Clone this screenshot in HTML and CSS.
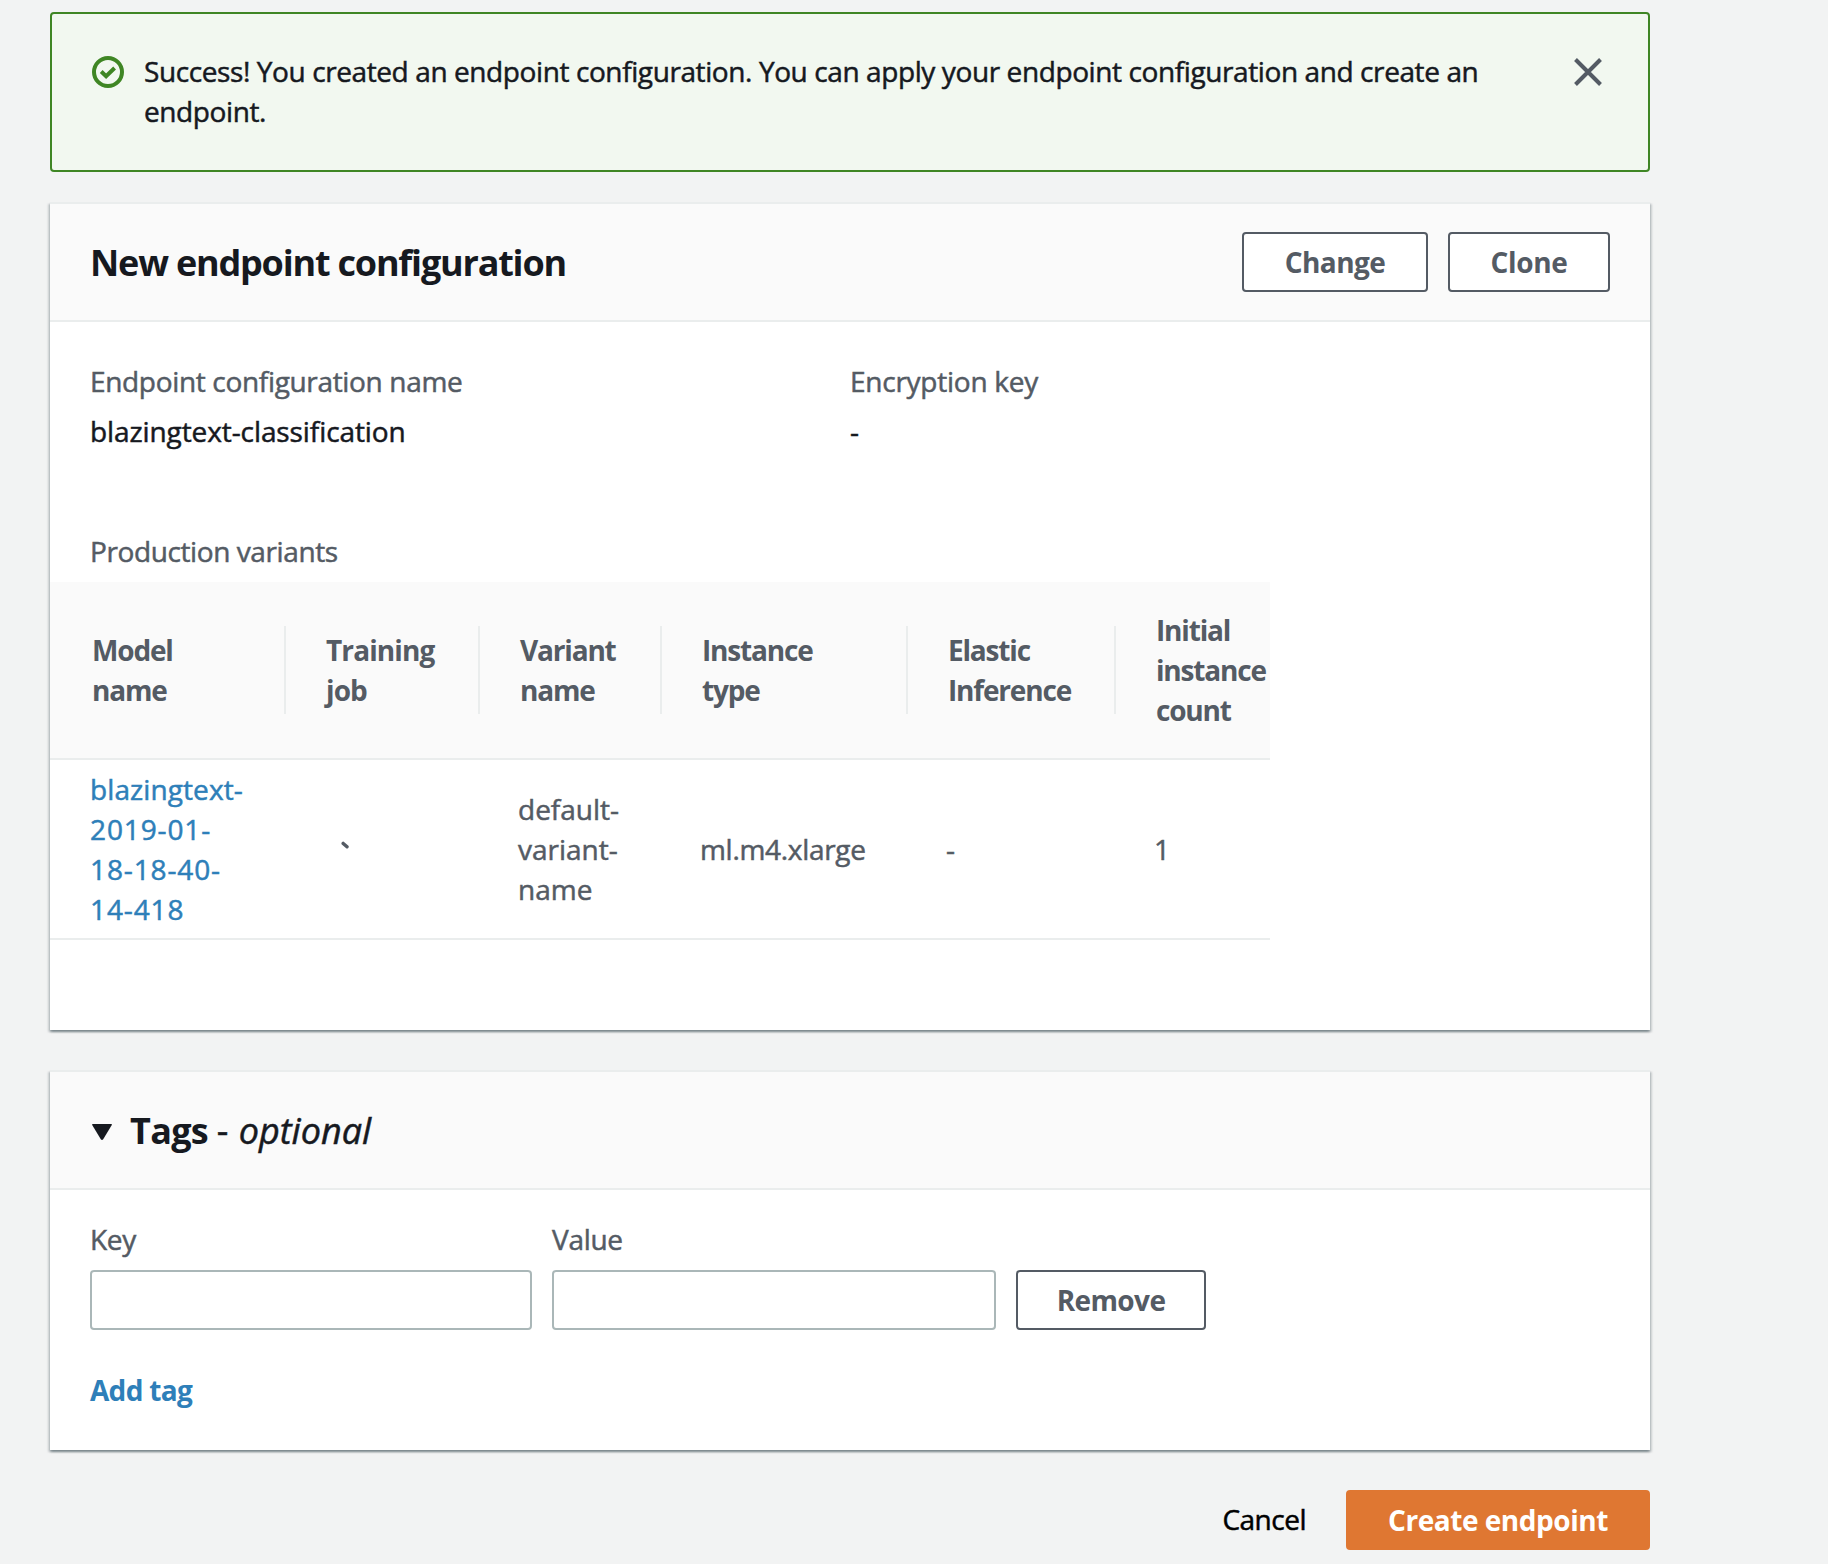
FILE: index.html
```html
<!DOCTYPE html>
<html lang="en">
<head>
<meta charset="utf-8">
<title>Create endpoint</title>
<link rel="stylesheet" href="styles.css">
</head>
<body>
<main class="page">
  <section class="alert">
    <svg class="alert-icon" viewBox="0 0 32 32"><circle cx="16" cy="16" r="14" fill="none" stroke="currentColor" stroke-width="4"/><path d="M9.200 15.500l4.900 4.700 8.500-8.200" fill="none" stroke="currentColor" stroke-width="4"/></svg>
    <p class="alert-text">Success! You created an endpoint configuration. You can apply your endpoint configuration and create an endpoint.</p>
    <svg class="alert-close" viewBox="0 0 28 28"><path d="M1.5 1.5l25 25M26.5 1.5l-25 25" fill="none" stroke="currentColor" stroke-width="4"/></svg>
  </section>

  <section class="panel config">
    <header class="panel-header">
      <h2 class="title">New endpoint configuration</h2>
      <div class="actions">
        <button class="btn change">Change</button>
        <button class="btn clone">Clone</button>
      </div>
    </header>
    <dl class="details">
      <div><dt class="label name">Endpoint configuration name</dt><dd class="value">blazingtext-classification</dd></div>
      <div><dt class="label key">Encryption key</dt><dd class="value">-</dd></div>
    </dl>
    <h3 class="label variants-label">Production variants</h3>
    <div class="variants">
      <div class="row head">
        <div class="cell">Model<br>name</div>
        <div class="cell">Training<br>job</div>
        <div class="cell">Variant<br>name</div>
        <div class="cell">Instance<br>type</div>
        <div class="cell">Elastic<br>Inference</div>
        <div class="cell">Initial<br>instance<br>count</div>
      </div>
      <div class="row">
        <div class="cell"><a class="link"><span class="word">blazingtext-</span><br>2019-01-<br>18-18-40-<br>14-418</a></div>
        <div class="cell"><svg class="mark" viewBox="0 0 9 9"><path d="M2.200 2.400l3.800 3.400" stroke="currentColor" stroke-width="3.4" stroke-linecap="round"/></svg></div>
        <div class="cell">default-<br>variant-<br>name</div>
        <div class="cell type">ml.m4.xlarge</div>
        <div class="cell">-</div>
        <div class="cell">1</div>
      </div>
    </div>
  </section>

  <section class="panel tags">
    <header class="panel-header">
      <svg class="caret" viewBox="0 0 20 16"><path d="M0.6 0h18.8q.8 0 .4 1l-8.600 14.200q-1.200 1.500-2.400 0L.2 1q-.4-1 .4-1z" fill="currentColor"/></svg>
      <h2 class="title tags-title">Tags <span class="optional">- <i>optional</i></span></h2>
    </header>
    <div class="tag-form">
      <label class="field key-field"><span class="label">Key</span><input class="input" type="text"></label>
      <label class="field value-field"><span class="label">Value</span><input class="input" type="text"></label>
      <button class="btn remove">Remove</button>
    </div>
    <a class="add">Add tag</a>
  </section>

  <footer class="footer">
    <a class="cancel">Cancel</a>
    <button class="btn primary">Create endpoint</button>
  </footer>
</main>
</body>
</html>
```
FILE: styles.css
```css
* { box-sizing: border-box; }

body {
  margin: 0;
  height: 1564px;
  overflow: hidden;
  background: #f2f3f3;
  color: #16191f;
  font: 400 28px/40px "Open Sans", "Noto Sans", sans-serif;
  -webkit-text-stroke: .5px currentColor;
}

h2, h3, p, dl, dd { margin: 0; }

.page { width: 1600px; margin: 0 0 0 50px; padding-top: 12px; }

/* Success alert */
.alert {
  display: flex;
  height: 160px;
  padding: 37px 46px 0 40px;
  border: 2px solid #3f8624;
  border-radius: 4px;
  background: #f2f8f0;
}
.alert-icon { width: 32px; height: 32px; margin-top: 5px; color: #3f8624; }
.alert-text { width: 1360px; margin-left: 20px; letter-spacing: -0.4px; }
.alert-close { width: 28px; height: 28px; margin: 7px 0 0 auto; color: #545b64; }

/* Panels */
.panel {
  background: #fff;
  border-top: 2px solid #eaeded;
  box-shadow: 0 2px 2px 0 rgba(0, 28, 36, .3), 2px 2px 2px 0 rgba(0, 28, 36, .15), -2px 2px 2px 0 rgba(0, 28, 36, .15);
}
.config { height: 828px; margin-top: 30px; }
.tags { height: 380px; margin-top: 40px; }
.panel-header {
  display: flex;
  align-items: center;
  height: 118px;
  padding: 0 40px;
  border-bottom: 2px solid #eaeded;
  background: #fafafa;
}
.title {
  padding-top: 2px;
  font-size: 36px;
  line-height: 40px;
  font-weight: 700;
  letter-spacing: -1.2px;
  -webkit-text-stroke: 0;
}
.actions { display: flex; gap: 20px; margin-left: auto; }

.btn {
  height: 60px;
  padding: 8px 0;
  border: 2px solid #545b64;
  border-radius: 4px;
  background: #fff;
  color: #545b64;
  font: 700 28px/40px "Open Sans", "Noto Sans", sans-serif;
  letter-spacing: -0.6px;
  -webkit-text-stroke: 0;
}
.change { width: 186px; }
.clone { width: 162px; letter-spacing: -0.35px; }
.remove { width: 190px; }
.primary {
  width: 304px;
  border-color: #df7732;
  background: #df7732;
  color: #fff;
  letter-spacing: -0.47px;
}

/* Configuration details */
.details { display: grid; grid-template-columns: 760px 1fr; padding: 39px 40px 0; }
.label { display: block; color: #545b64; font-size: 28px; font-weight: 400; letter-spacing: -.3px; }
.name { letter-spacing: -0.33px; }
.key { letter-spacing: -0.25px; }
.value { margin-top: 10px; letter-spacing: -.09px; }
.variants-label { margin: 80px 0 0; padding: 0 40px; letter-spacing: -0.4px; }

/* Production variants table */
.variants { width: 1220px; margin-top: 11px; color: #545b64; }
.row {
  display: grid;
  grid-template-columns: 236px 194px 182px 246px 208px 1fr;
  align-items: center;
  height: 180px;
  border-bottom: 2px solid #eaeded;
}
.cell { padding-left: 40px; }
.row:not(.head) .cell:nth-child(n+2) { padding-left: 38px; }
.head {
  height: 178px;
  background: #fafafa;
  font-weight: 700;
  letter-spacing: -1.18px;
  -webkit-text-stroke: 0;
}
.head .cell { display: flex; align-items: center; height: 88px; border-right: 2px solid #eaeded; }
.head .cell:first-child { padding-left: 42px; }
.head .cell:nth-child(2) { letter-spacing: -.9px; }
.head .cell:last-child { border-right: 0; }
.link { color: #2e7fb9; letter-spacing: .87px; }
.word { letter-spacing: .1px; }
.type { letter-spacing: -.3px; }
.mark { display: block; width: 9px; height: 9px; margin: -8px 0 0 17px; }

/* Tags */
.caret { width: 20px; height: 16px; margin: 4px 18px 0 2px; }
.tags-title { letter-spacing: -0.7px; }
.optional { font-weight: 400; letter-spacing: 0; word-spacing: 1px; -webkit-text-stroke: .5px currentColor; }
.tag-form { display: flex; align-items: flex-end; gap: 20px; padding: 29px 40px 0; }
.key-field { width: 442px; }
.value-field { width: 444px; }
.input {
  display: block;
  width: 100%;
  height: 60px;
  margin-top: 11px;
  border: 2px solid #aab7b8;
  border-radius: 4px;
  background: #fff;
}
.add {
  display: block;
  margin: 40px 0 0 40px;
  color: #2e7fb9;
  font-weight: 700;
  letter-spacing: -0.7px;
  -webkit-text-stroke: 0;
}

/* Page actions */
.footer { display: flex; justify-content: flex-end; gap: 40px; margin-top: 40px; }
.cancel { padding-top: 9px; color: #000; letter-spacing: -0.5px; }
```
